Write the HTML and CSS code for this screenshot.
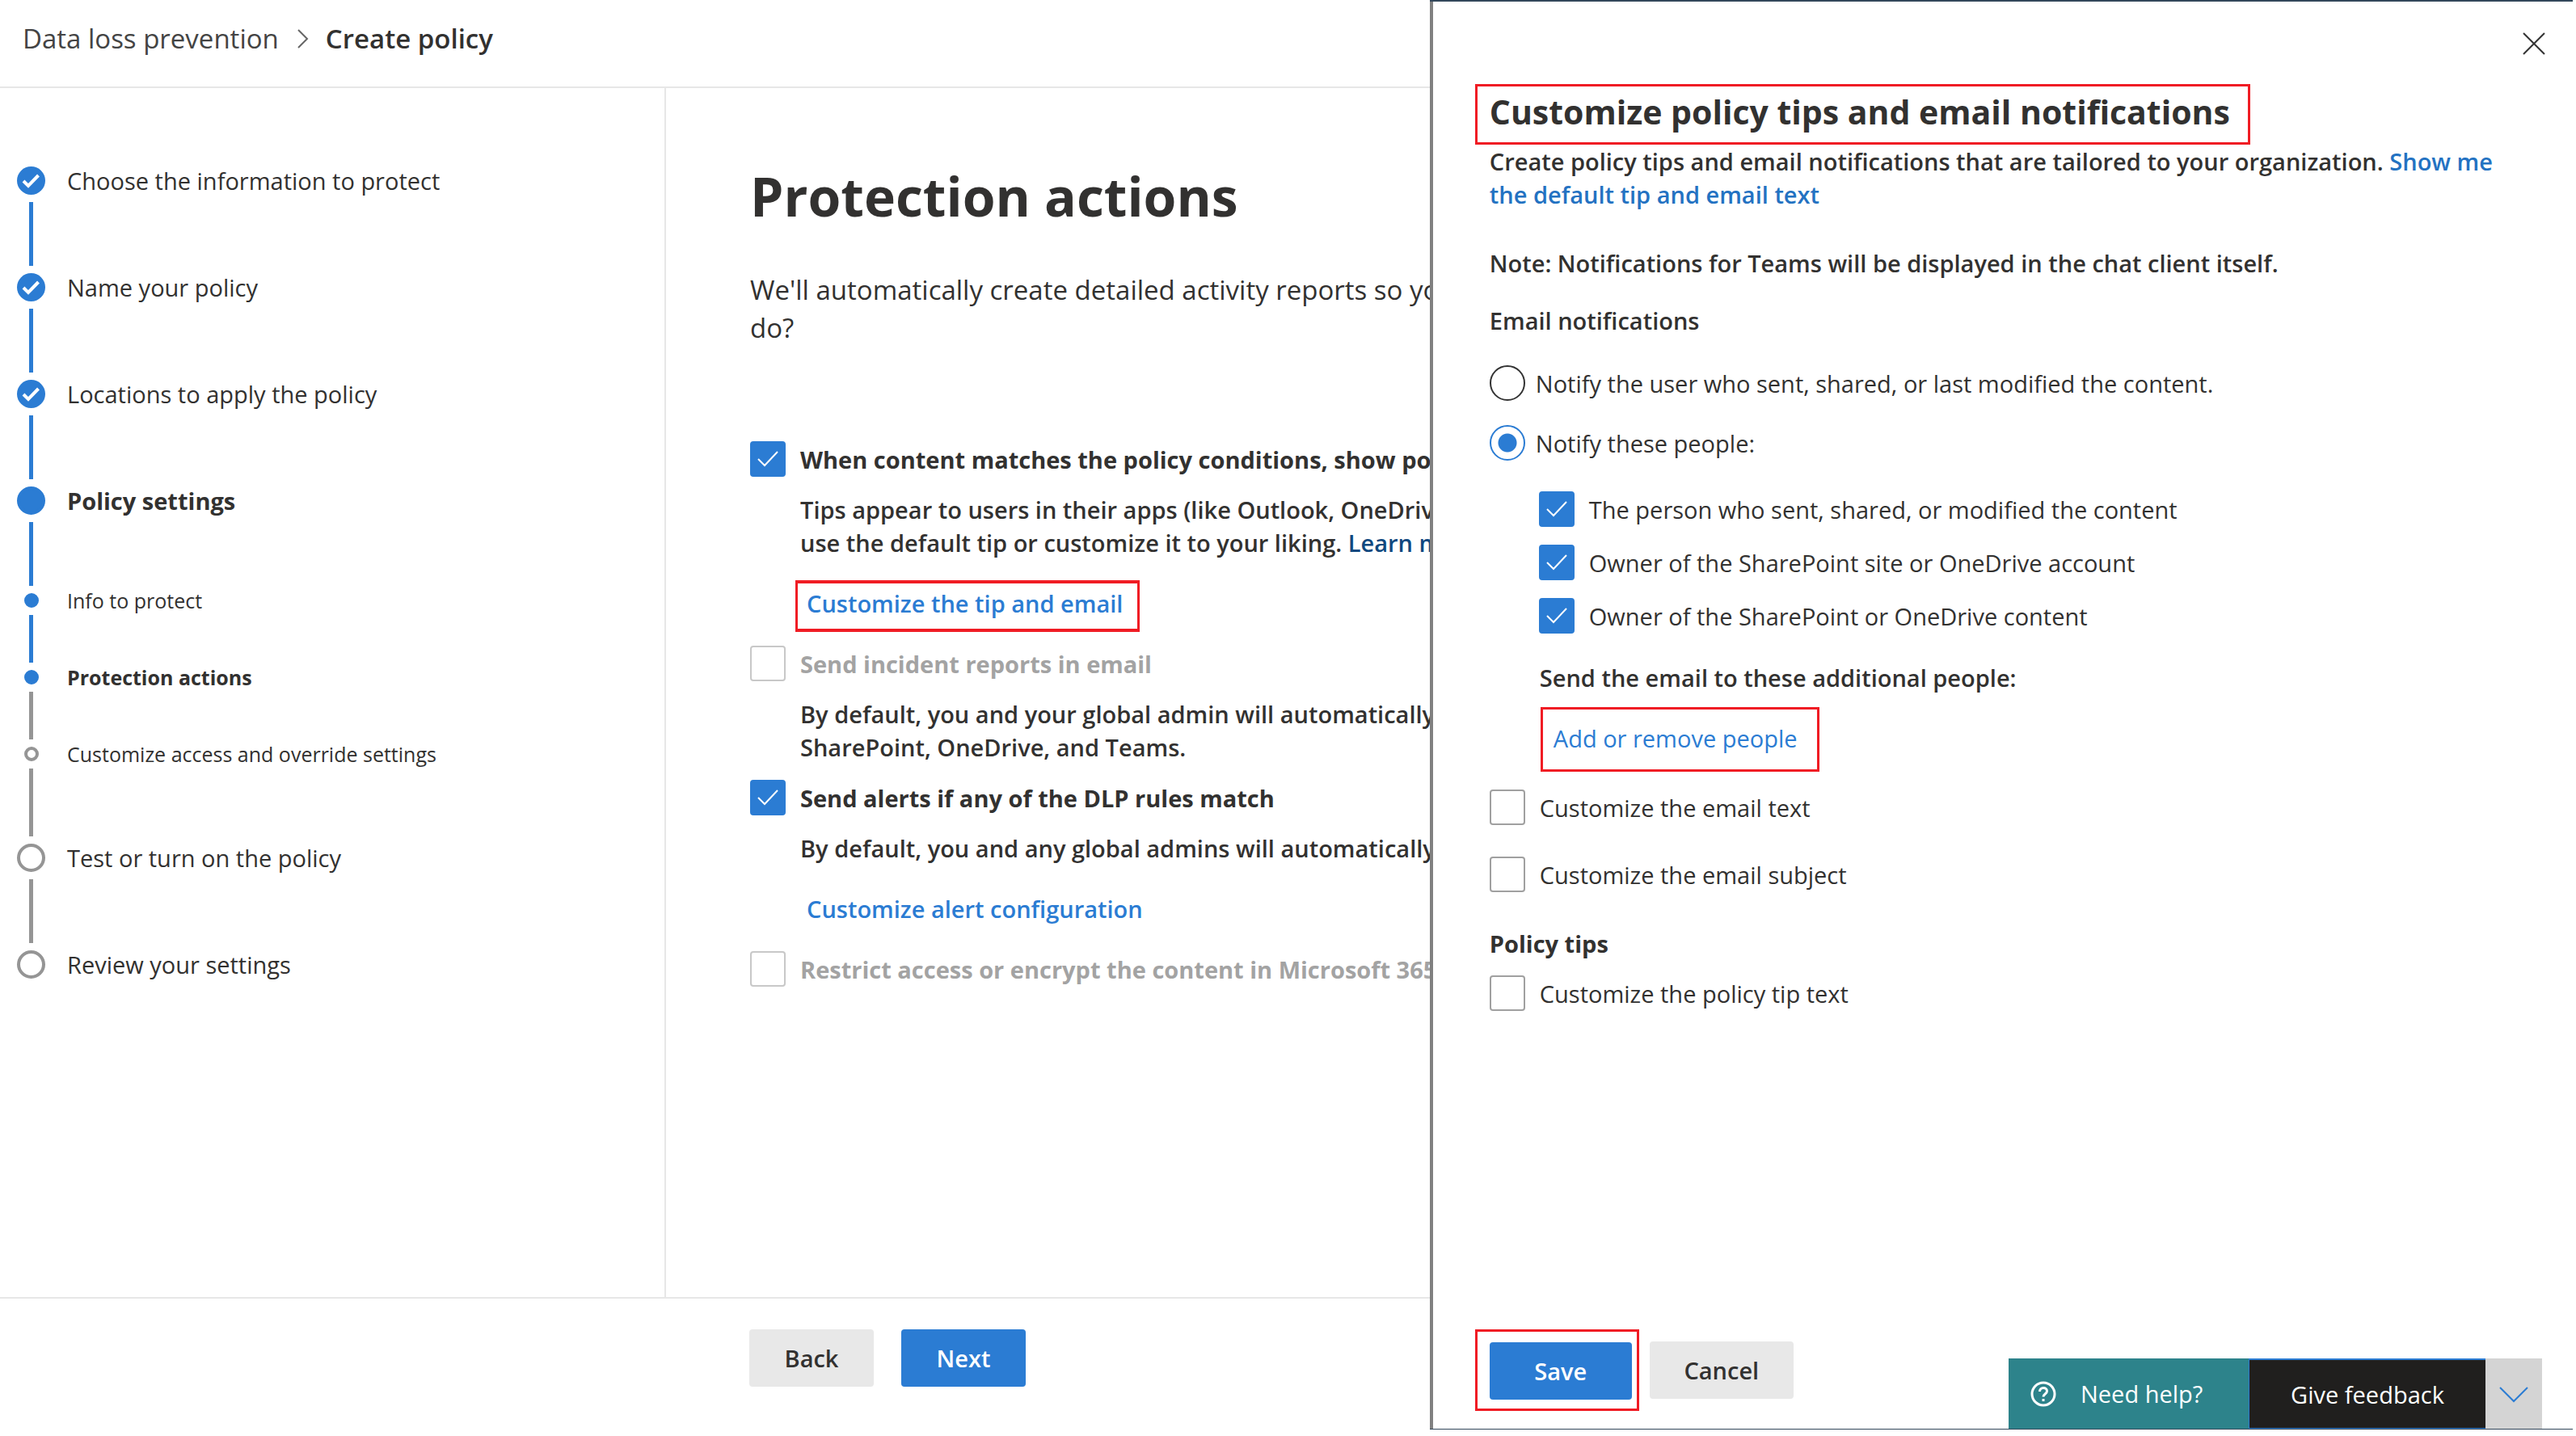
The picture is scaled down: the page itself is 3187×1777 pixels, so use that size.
FILE: index.html
```html
<!DOCTYPE html>
<html lang="en">
<head>
<meta charset="utf-8">
<title>Create policy - Data loss prevention</title>
<link rel="stylesheet" href="styles.css">
</head>
<body>
<div class="app">
  <div class="wizard">
    <nav class="breadcrumb" aria-label="Breadcrumb">
      <a href="#dlp">Data loss prevention</a>
      <svg class="crumb-arrow" viewBox="0 0 14 24" aria-hidden="true"><path d="M1 1l11 11L1 23"/></svg>
      <span class="crumb-current">Create policy</span>
    </nav>

    <div class="wizard-body">
      <aside class="steps">
        <ol class="step-list">
          <li class="step done"><span class="rail"><svg class="mark" viewBox="0 0 35 35" aria-hidden="true"><circle cx="17.500" cy="17.500" r="17.500"/><path d="M8 18l6 6L26.500 11"/></svg></span><span class="step-name">Choose the information to protect</span></li>
          <li class="step done"><span class="rail"><svg class="mark" viewBox="0 0 35 35" aria-hidden="true"><circle cx="17.500" cy="17.500" r="17.500"/><path d="M8 18l6 6L26.500 11"/></svg></span><span class="step-name">Name your policy</span></li>
          <li class="step done"><span class="rail"><svg class="mark" viewBox="0 0 35 35" aria-hidden="true"><circle cx="17.500" cy="17.500" r="17.500"/><path d="M8 18l6 6L26.500 11"/></svg></span><span class="step-name">Locations to apply the policy</span></li>
          <li class="step done current"><span class="rail"><span class="dot"></span></span><span class="step-name">Policy settings</span></li>
          <li class="step sub done"><span class="rail"><span class="dot"></span></span><span class="step-name">Info to protect</span></li>
          <li class="step sub reached current"><span class="rail"><span class="dot"></span></span><span class="step-name">Protection actions</span></li>
          <li class="step sub last-sub"><span class="rail"><span class="dot"></span></span><span class="step-name">Customize access and override settings</span></li>
          <li class="step"><span class="rail"><span class="dot"></span></span><span class="step-name">Test or turn on the policy</span></li>
          <li class="step"><span class="rail"><span class="dot"></span></span><span class="step-name">Review your settings</span></li>
        </ol>
      </aside>

      <main class="content">
        <h1>Protection actions</h1>
        <p class="intro">We'll automatically create detailed activity reports so you<br>do?</p>

        <label class="check strong"><input type="checkbox" checked><span>When content matches the policy conditions, show policy</span></label>
        <p class="detail">Tips appear to users in their apps (like Outlook, OneDrive,<br>use the default tip or customize it to your liking. <a class="learn" href="#learn">Learn more</a></p>
        <a class="action framed" href="#tip">Customize the tip and email</a>

        <label class="check strong"><input type="checkbox" disabled><span>Send incident reports in email</span></label>
        <p class="detail">By default, you and your global admin will automatically<br>SharePoint, OneDrive, and Teams.</p>

        <label class="check strong"><input type="checkbox" checked><span>Send alerts if any of the DLP rules match</span></label>
        <p class="detail">By default, you and any global admins will automatically</p>
        <a class="action" href="#alert">Customize alert configuration</a>

        <label class="check strong"><input type="checkbox" disabled><span>Restrict access or encrypt the content in Microsoft 365</span></label>
      </main>
    </div>

    <footer class="wizard-footer">
      <button class="btn" type="button">Back</button>
      <button class="btn primary" type="button">Next</button>
    </footer>
  </div>

  <section class="panel" aria-labelledby="panel-title">
    <div class="panel-top">
      <button class="close" type="button" aria-label="Close"><svg viewBox="0 0 28 28" aria-hidden="true"><path d="M1 1l26 26M27 1L1 27"/></svg></button>
    </div>
    <h2 id="panel-title">Customize policy tips and email notifications</h2>
    <form class="panel-form">
      <p class="lead">Create policy tips and email notifications that are tailored to your organization. <a href="#default">Show me the default tip and email text</a></p>
      <p class="note">Note: Notifications for Teams will be displayed in the chat client itself.</p>
      <h3>Email notifications</h3>
      <div class="radios">
        <label class="check"><input type="radio" name="notify"><span>Notify the user who sent, shared, or last modified the content.</span></label>
        <label class="check"><input type="radio" name="notify" checked><span>Notify these people:</span></label>
      </div>
      <div class="people">
        <label class="check"><input type="checkbox" checked><span>The person who sent, shared, or modified the content</span></label>
        <label class="check"><input type="checkbox" checked><span>Owner of the SharePoint site or OneDrive account</span></label>
        <label class="check"><input type="checkbox" checked><span>Owner of the SharePoint or OneDrive content</span></label>
      </div>
      <p class="extra">Send the email to these additional people:</p>
      <a class="add-people" href="#people">Add or remove people</a>
      <div class="options">
        <label class="check"><input type="checkbox"><span>Customize the email text</span></label>
        <label class="check"><input type="checkbox"><span>Customize the email subject</span></label>
      </div>
      <h3 class="tips">Policy tips</h3>
      <label class="check"><input type="checkbox"><span>Customize the policy tip text</span></label>
      <div class="panel-actions">
        <div class="save-frame"><button class="btn primary wide" type="button">Save</button></div>
        <button class="btn wide" type="button">Cancel</button>
      </div>
    </form>
    <div class="support">
      <button class="help" type="button"><svg viewBox="0 0 32 32" aria-hidden="true"><circle cx="16" cy="16" r="14"/><path d="M11.500 13c0-6 9-6 9-.5 0 3.500-4.500 3.500-4.500 7"/><path d="M16 22v3"/></svg>Need help?</button>
      <button class="feedback" type="button">Give feedback</button>
      <button class="collapse" type="button" aria-label="Collapse"><svg viewBox="0 0 36 20" aria-hidden="true"><path d="M1 1l17 17L35 1"/></svg></button>
    </div>
  </section>
</div>
</body>
</html>
```
FILE: styles.css
```css
* { box-sizing: border-box; }

:root {
  --blue: #2b7cd3;
  --text: #323130;
  --gray: #959595;
  --line: #e7e7e7;
  --red: #f01c24;
}

body {
  margin: 0;
  background: #fff;
  color: var(--text);
  font: 29px/41px "Open Sans", "Noto Sans", sans-serif;
}

h1, h2, h3, p, ol { margin: 0; }
a { color: var(--blue); text-decoration: none; }
button { font: inherit; border: 0; padding: 0; color: inherit; }

.app {
  display: grid;
  grid-template-columns: minmax(0, 1fr) 44.5%;
  min-height: 100vh;
}

/* Wizard */
.wizard {
  display: flex;
  flex-direction: column;
  overflow: hidden;
}

.breadcrumb {
  display: flex;
  align-items: center;
  height: 109px;
  padding: 0 28px 12px;
  border-bottom: 2px solid var(--line);
  font-size: 33px;
}
.breadcrumb a { color: #444; }
.crumb-arrow {
  width: 14px;
  height: 24px;
  margin: 0 21px 0 23px;
  fill: none;
  stroke: #666;
  stroke-width: 2;
}
.crumb-current { font-weight: 600; }

.wizard-body { display: flex; flex: 1; }

.steps {
  flex: 0 0 824px;
  padding: 97px 20px 0 21px;
  border-right: 2px solid var(--line);
}
.step-list { padding: 0; list-style: none; }
.step {
  --size: 35px;
  --track: 79px;
  --tone: var(--gray);
  --fill: transparent;
  display: flex;
  align-items: flex-start;
  gap: 27px;
}
.step.sub { --size: 18px; --track: 59px; font-size: 25px; }
.step.last-sub { --track: 84px; }
.step.done { --tone: var(--blue); --fill: var(--blue); }
.step.reached .dot { --tone: var(--blue); --fill: var(--blue); }
.rail {
  display: flex;
  flex: 0 0 35px;
  flex-direction: column;
  align-items: center;
  gap: 9px;
  padding-bottom: 9px;
}
.step:not(:last-child) .rail::after {
  content: "";
  width: 5px;
  height: var(--track);
  background: var(--tone);
}
.dot, .mark { width: var(--size); height: var(--size); }
.dot {
  border: 4px solid var(--tone);
  border-radius: 50%;
  background: var(--fill);
}
.mark circle { fill: var(--blue); }
.mark path { fill: none; stroke: #fff; stroke-width: 4; }
.step-name { line-height: var(--size); white-space: nowrap; }
.current .step-name { font-weight: 700; }

.content {
  display: flex;
  flex: 1;
  flex-direction: column;
  align-items: flex-start;
  padding: 91px 0 0 104px;
  white-space: nowrap;
}
h1 { font-size: 66px; line-height: 84px; }
.intro { margin: 51px 0 117px; font-size: 33px; line-height: 47px; }
.detail { margin: 20px 0 0 62px; font-weight: 600; }
.detail:not(:has(+ .action)) { margin-bottom: 20px; }
.learn { color: #10497f; }
.action {
  margin: 26px 0 17px 56px;
  padding: 4px 18px 11px 11px;
  border: 4px solid transparent;
  border-width: 4px 3px;
  font-weight: 600;
}
.framed { border-color: var(--red); }

/* Tick boxes and radios */
.check { display: flex; align-items: center; gap: 18px; height: 44px; }
.check input {
  flex: none;
  width: 44px;
  height: 44px;
  margin: 0;
  appearance: none;
  border: 2px solid #a0a0a0;
  border-radius: 4px;
  background: #fff center / 26px 20px no-repeat;
}
.check input:disabled { border-color: #c8c8c8; }
.check input:disabled + span { color: #a3a3a3; }
.check input[type="checkbox"]:checked {
  border-color: var(--blue);
  background-color: var(--blue);
  background-image: url("data:image/svg+xml,%3Csvg xmlns='http://www.w3.org/2000/svg' viewBox='0 0 26 20'%3E%3Cpath d='M1 10l8 8L25 1' fill='none' stroke='white' stroke-width='2'/%3E%3C/svg%3E");
}
.check input[type="radio"] { border-color: #333; border-radius: 50%; }
.check input[type="radio"]:checked {
  border-color: var(--blue);
  background: radial-gradient(circle, var(--blue) 11px, #fff 12px);
}
.strong { font-weight: 700; }

/* Buttons */
.btn {
  width: 154px;
  height: 71px;
  border-radius: 4px;
  background: #e8e8e8;
  font-weight: 600;
}
.btn.primary { background: var(--blue); color: #fff; }
.btn.wide { width: 178px; }

.wizard-footer {
  display: flex;
  gap: 34px;
  height: 172px;
  padding: 38px 0 0 927px;
  border-top: 2px solid var(--line);
}

/* Side panel */
.panel {
  position: relative;
  display: flex;
  flex-direction: column;
  align-items: stretch;
  margin: 0 4px 8px 0;
  border: solid #33475b;
  border-width: 2px 0 1px;
  box-shadow: inset 4px 0 #808080;
}
.panel-top {
  display: flex;
  justify-content: flex-end;
  align-items: center;
  height: 102px;
  padding: 2px 34px 0 0;
}
.close { width: 28px; height: 28px; background: none; }
.close svg { display: block; fill: none; stroke: #333; stroke-width: 2; }
h2 {
  align-self: flex-start;
  margin-left: 56px;
  padding: 0 22px 7px 15px;
  border: 3px solid var(--red);
  font-size: 41px;
  line-height: 62px;
  white-space: nowrap;
}
.panel-form {
  display: flex;
  flex: 1;
  flex-direction: column;
  align-items: flex-start;
  padding: 0 80px 22px 74px;
}
.lead, .note, .extra { font-weight: 600; }
.lead a { color: #2372c2; }
.note { margin: 44px 0 30px; }
h3 { font-size: 29px; font-weight: 600; }
.radios { display: grid; gap: 30px; margin: 35px 0 38px; }
.radios .check { gap: 13px; }
.people { display: grid; gap: 22px; margin-left: 61px; }
.extra { margin: 34px 0 16px 62px; }
.add-people {
  margin-left: 63px;
  padding: 15px 24px 18px 13px;
  border: 3px solid var(--red);
}
.options { display: grid; gap: 39px; margin: 22px 0 43px; }
.tips { margin-bottom: 19px; font-weight: 700; }
.panel-actions {
  display: flex;
  align-items: center;
  gap: 13px;
  margin: auto 0 0 -18px;
}
.save-frame {
  padding: 13px 6px 11px 15px;
  border: 3px solid var(--red);
}
.save-frame .btn { display: block; width: 176px; }

/* Support bar over the panel's lower corner */
.support {
  position: absolute;
  right: 38px;
  bottom: 0;
  display: flex;
  height: 87px;
}
.help {
  display: flex;
  align-items: center;
  gap: 30px;
  width: 297px;
  padding-left: 27px;
  background: #2d838b;
  color: #fff;
}
.help svg { width: 32px; height: 32px; fill: none; stroke: #fff; stroke-width: 3; }
.feedback {
  width: 293px;
  border: solid var(--blue);
  border-width: 2px 0 1px 1px;
  background: #201f1e;
  color: #fff;
}
.collapse { width: 70px; background: #d4d4d4; }
.collapse svg { width: 36px; height: 20px; fill: none; stroke: var(--blue); stroke-width: 2; }
```
